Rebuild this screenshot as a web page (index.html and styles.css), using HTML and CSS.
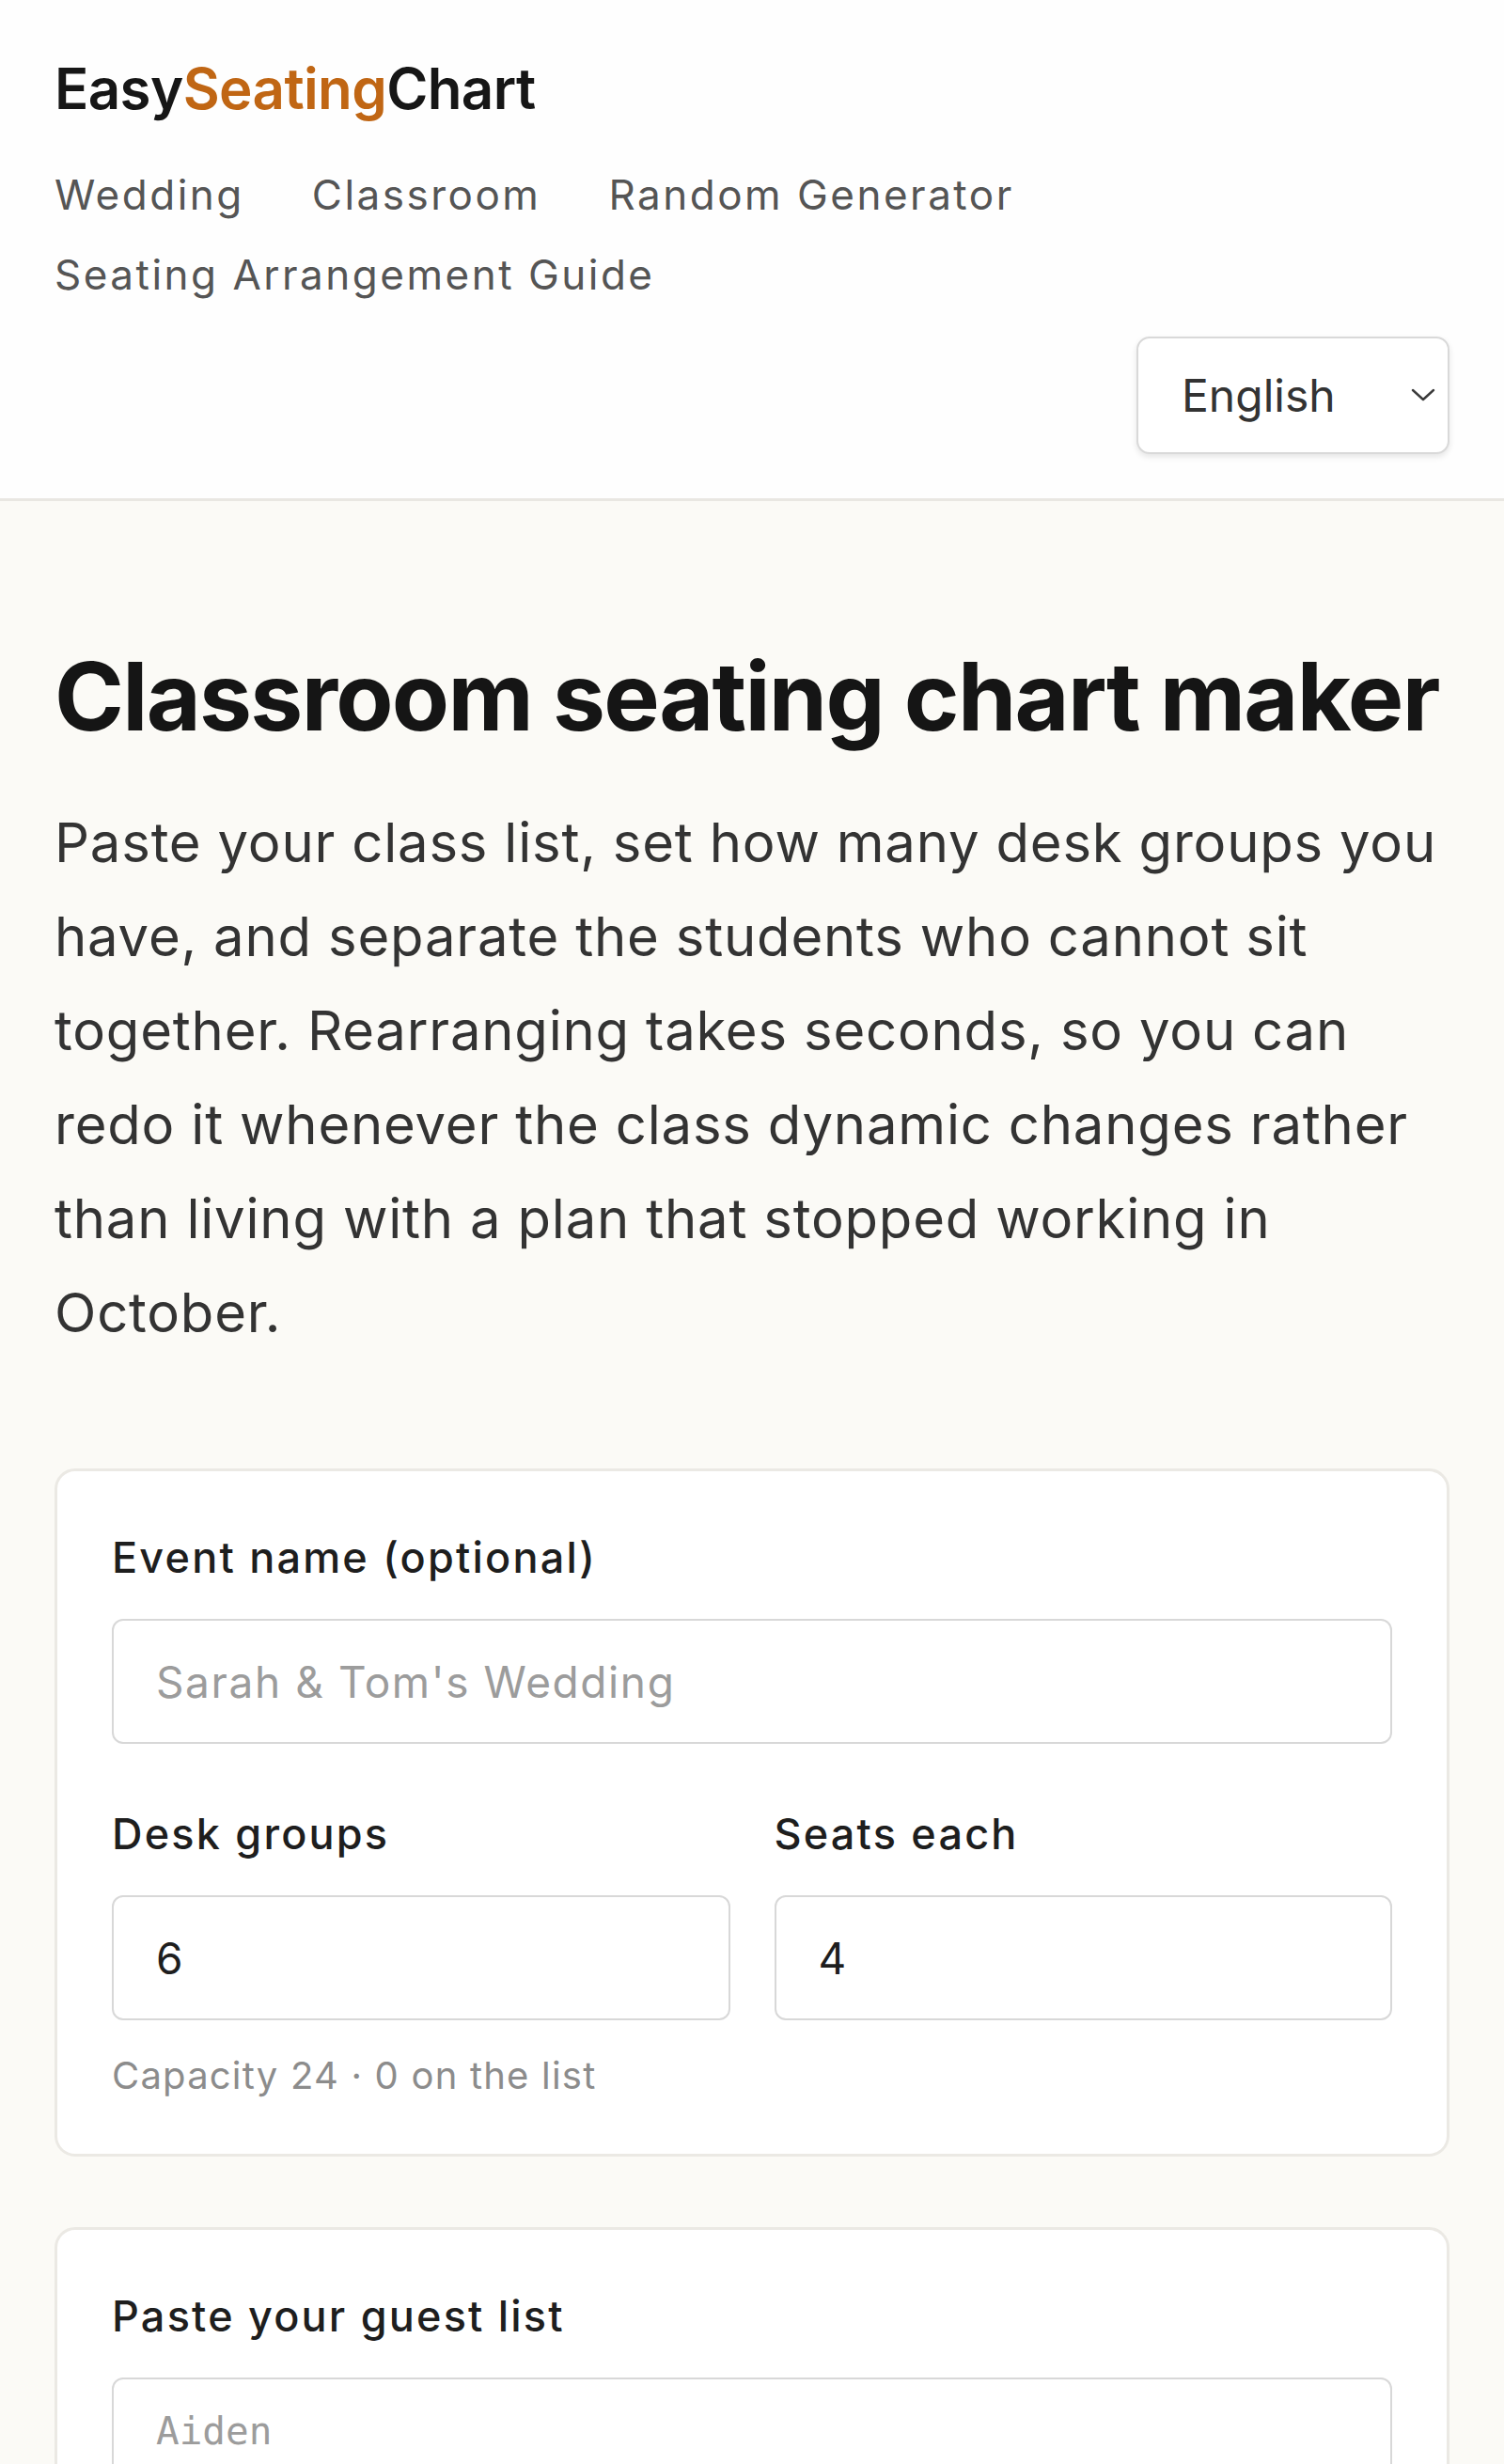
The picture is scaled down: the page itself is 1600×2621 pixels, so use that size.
FILE: index.html
```html
<!DOCTYPE html>
<html lang="en">
<head>
  <meta charset="UTF-8" />
  <title>Classroom Seating Chart Maker - EasySeatingChart</title>
  <meta name="viewport" content="width=device-width, initial-scale=1.0" />
  <link rel="stylesheet" href="styles.css">
</head>
<body>
  <header class="site-header">
    <a class="logo" href="/">Easy<span>Seating</span>Chart</a>

    <nav class="main-nav">
      <a href="/wedding">Wedding</a>
      <a href="/classroom">Classroom</a>
      <a href="/random">Random Generator</a>
      <a href="/guide">Seating Arrangement Guide</a>
    </nav>

    <div class="lang">
      <select aria-label="Language">
        <option>English</option>
        <option>Español</option>
        <option>Français</option>
        <option>Deutsch</option>
      </select>
      <svg viewBox="0 0 28 16" aria-hidden="true">
        <path d="M3 3 L14 13 L25 3" fill="none" stroke="#3a3a3a" stroke-width="2.4" stroke-linecap="round" stroke-linejoin="round"/>
      </svg>
    </div>
  </header>

  <main>
    <h1>Classroom seating chart maker</h1>
    <p class="intro">
      Paste your class list, set how many desk groups you have, and separate the
      students who cannot sit together. Rearranging takes seconds, so you can redo
      it whenever the class dynamic changes rather than living with a plan that
      stopped working in October.
    </p>

    <section class="card">
      <div class="field">
        <label for="event-name">Event name (optional)</label>
        <input id="event-name" type="text" placeholder="Sarah &amp; Tom's Wedding">
      </div>

      <div class="row">
        <div class="field">
          <label for="groups">Desk groups</label>
          <input id="groups" type="number" value="6" min="1">
        </div>
        <div class="field">
          <label for="seats">Seats each</label>
          <input id="seats" type="number" value="4" min="1">
        </div>
      </div>

      <p class="hint">Capacity <span id="capacity">24</span> · <span id="count">0</span> on the list</p>
    </section>

    <section class="card">
      <div class="field">
        <label for="guests">Paste your guest list</label>
        <textarea id="guests" rows="8" placeholder="Aiden&#10;Bella&#10;Carlos&#10;Dana&#10;Eli&#10;Fatima&#10;Grace"></textarea>
      </div>
    </section>
  </main>

  <script>
    const groups = document.getElementById('groups');
    const seats = document.getElementById('seats');
    const guests = document.getElementById('guests');

    function updateCapacity() {
      const cap = (parseInt(groups.value) || 0) * (parseInt(seats.value) || 0);
      const names = guests.value.split('\n').filter(n => n.trim() !== '');
      document.getElementById('capacity').textContent = cap;
      document.getElementById('count').textContent = names.length;
    }

    groups.addEventListener('input', updateCapacity);
    seats.addEventListener('input', updateCapacity);
    guests.addEventListener('input', updateCapacity);
  </script>
</body>
</html>
```

FILE: styles.css
```css
* {
  box-sizing: border-box;
}

body {
  margin: 0;
  font-family: Inter, "Noto Sans", sans-serif;
  background: #fbfaf6;
  color: #1c1c1c;
}

/* header */

.site-header {
  background: #fefefe;
  border-bottom: 3px solid #e9e7e2;
  padding: 58px 58px 47px;
  display: flex;
  flex-direction: column;
  align-items: flex-start;
}

.logo {
  font-size: 60px;
  line-height: 72px;
  font-weight: 600;
  letter-spacing: -0.01em;
  color: #161616;
  text-decoration: none;
}

.logo span {
  color: #c06614;
}

.main-nav {
  margin-top: 44px;
  display: flex;
  flex-wrap: wrap;
  column-gap: 72px;
  row-gap: 19px;
}

.main-nav a {
  font-size: 44px;
  line-height: 66px;
  letter-spacing: 2.5px;
  color: #555;
  text-decoration: none;
}

.lang {
  align-self: flex-end;
  margin-top: 33px;
  position: relative;
}

.lang select {
  appearance: none;
  -webkit-appearance: none;
  display: block;
  width: 333px;
  height: 125px;
  padding: 0 0 0 46px;
  font-family: Inter, sans-serif;
  font-size: 48px;
  color: #333;
  background: #fff;
  border: 2px solid #d9d9d9;
  border-radius: 14px;
  box-shadow: 0 3px 6px rgba(0, 0, 0, 0.1);
}

.lang svg {
  position: absolute;
  right: 14px;
  top: 54px;
  width: 28px;
  height: 16px;
  pointer-events: none;
}

/* main */

main {
  padding: 150px 58px 80px;
}

h1 {
  margin: 0;
  font-size: 100px;
  line-height: 115px;
  font-weight: 700;
  letter-spacing: -0.017em;
  color: #151515;
}

.intro {
  margin: 48px 0 0;
  font-size: 58px;
  line-height: 100px;
  letter-spacing: 0.8px;
  color: #333;
}

.card {
  background: #fff;
  border: 3px solid #ebe9e4;
  border-radius: 22px;
  padding: 60px 58px 55px;
  margin-top: 116px;
}

.card + .card {
  margin-top: 75px;
}

.field label {
  display: block;
  font-size: 45px;
  line-height: 63px;
  font-weight: 500;
  letter-spacing: 2.2px;
  color: #1e1e1e;
  margin-bottom: 34px;
}

.field input,
.field textarea {
  display: block;
  width: 100%;
  border: 2px solid #d8d8d8;
  border-radius: 12px;
  background: #fff;
  color: #1e1e1e;
}

.field input {
  height: 133px;
  padding: 0 45px;
  font-family: Inter, sans-serif;
  font-size: 46px;
  letter-spacing: 1.6px;
}

.field input::-webkit-inner-spin-button,
.field input::-webkit-outer-spin-button {
  -webkit-appearance: none;
  margin: 0;
}

.field textarea {
  height: 520px;
  padding: 25px 45px;
  font-family: "DejaVu Sans Mono", "Liberation Mono", monospace;
  font-size: 41px;
  line-height: 1.5;
  resize: vertical;
}

.field ::placeholder {
  color: #9c9c9c;
}

.row {
  display: grid;
  grid-template-columns: 1fr 1fr;
  gap: 47px;
  margin-top: 64px;
}

.hint {
  margin: 31px 0 0;
  font-size: 40px;
  line-height: 56px;
  letter-spacing: 1.2px;
  color: #8c8c8c;
}
```
